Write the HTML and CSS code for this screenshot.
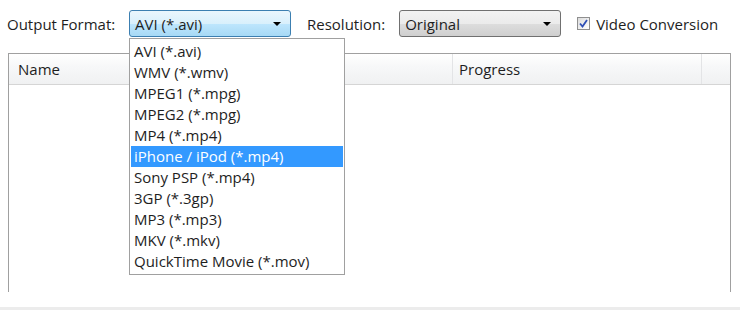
FILE: index.html
```html
<!DOCTYPE html>
<html>
<head>
    <title>Converter</title>
    <link rel="stylesheet" href="styles.css">
</head>
<body>
    <div class="window">
        <div class="toolbar">
            <label class="label">Output Format:</label>
            <div class="select select-active">
                <span>AVI (*.avi)</span>
                <span class="arrow"></span>
                <ul class="dropdown">
                    <li>AVI (*.avi)</li>
                    <li>WMV (*.wmv)</li>
                    <li>MPEG1 (*.mpg)</li>
                    <li>MPEG2 (*.mpg)</li>
                    <li>MP4 (*.mp4)</li>
                    <li class="selected">iPhone / iPod (*.mp4)</li>
                    <li>Sony PSP (*.mp4)</li>
                    <li>3GP (*.3gp)</li>
                    <li>MP3 (*.mp3)</li>
                    <li>MKV (*.mkv)</li>
                    <li>QuickTime Movie (*.mov)</li>
                </ul>
            </div>
            <label class="label label-res">Resolution:</label>
            <div class="select select-res">
                <span>Original</span>
                <span class="arrow"></span>
            </div>
            <label class="check">
                <span class="box">
                    <svg width="9" height="9" viewBox="0 0 9 9"><path d="M1 4.5 L3.5 7.5 L8 1" fill="none" stroke="#2f4fb5" stroke-width="1.8"/></svg>
                </span>
                Video Conversion
            </label>
        </div>
        <div class="table">
            <div class="thead">
                <div class="col col-name">Name</div>
                <div class="col col-size">Size</div>
                <div class="col col-progress">Progress</div>
                <div class="col col-end"></div>
            </div>
            <div class="tbody"></div>
        </div>
        <div class="footer"></div>
    </div>
</body>
</html>
```

FILE: styles.css
```css
body {
    margin: 0;
    font-family: "Open Sans", "Noto Sans", sans-serif;
    font-size: 15px;
    color: #1e1e1e;
    background: #ffffff;
}
.window {
    width: 740px;
    height: 310px;
    overflow: hidden;
}
.toolbar {
    display: flex;
    align-items: center;
    height: 27px;
    padding: 10px 0 0 7px;
}
.label {
    width: 122px;
}
.label-res {
    width: auto;
    margin-left: 16px;
    margin-right: 14px;
}
.select {
    position: relative;
    box-sizing: border-box;
    width: 162px;
    height: 27px;
    border: 1px solid #707070;
    border-radius: 3px;
    background: linear-gradient(#f2f2f2 0%, #ebebeb 50%, #dddddd 51%, #cfcfcf 100%);
    display: flex;
    align-items: center;
    justify-content: space-between;
    padding: 0 9px 0 5px;
}
.select-active {
    border-color: #3c7fb1;
    background: linear-gradient(#eaf6fd 0%, #d9f0fc 50%, #bee6fd 51%, #a7d9f5 100%);
}
.arrow {
    width: 0;
    height: 0;
    border-left: 4px solid transparent;
    border-right: 4px solid transparent;
    border-top: 4px solid #000000;
}
.check {
    display: flex;
    align-items: center;
    margin-left: 16px;
}
.box {
    box-sizing: border-box;
    width: 13px;
    height: 13px;
    border: 1px solid #8f8f8f;
    background: linear-gradient(135deg, #dcdcdc, #ffffff);
    display: flex;
    align-items: center;
    justify-content: center;
    margin-right: 6px;
}
.dropdown {
    position: absolute;
    top: 27px;
    left: -1px;
    width: 216px;
    box-sizing: border-box;
    margin: 0;
    padding: 2px 0;
    list-style: none;
    background: #ffffff;
    border: 1px solid #a0a0a0;
    z-index: 2;
}
.dropdown li {
    height: 21px;
    line-height: 21px;
    padding-left: 3px;
    margin: 0 1px;
    white-space: nowrap;
}
.dropdown li.selected {
    background: #3399ff;
    color: #ffffff;
}
.table {
    margin: 16px 0 0 8px;
    width: 723px;
    height: 239px;
    border: 1px solid #a0a0a0;
    border-bottom: none;
    box-sizing: border-box;
}
.thead {
    display: flex;
    height: 30px;
    background: linear-gradient(#ffffff 0%, #f7f8f9 40%, #f0f1f2 100%);
    border-bottom: 1px solid #d5d5d5;
}
.col {
    box-sizing: border-box;
    display: flex;
    align-items: center;
    padding-left: 9px;
    border-right: 1px solid #e3e4e6;
}
.col-name {
    width: 250px;
}
.col-size {
    width: 194px;
}
.col-progress {
    width: 249px;
    padding-left: 6px;
}
.col-end {
    flex: 1;
    border-right: none;
}
.footer {
    margin-top: 15px;
    height: 3px;
    background: #ececec;
}
```
